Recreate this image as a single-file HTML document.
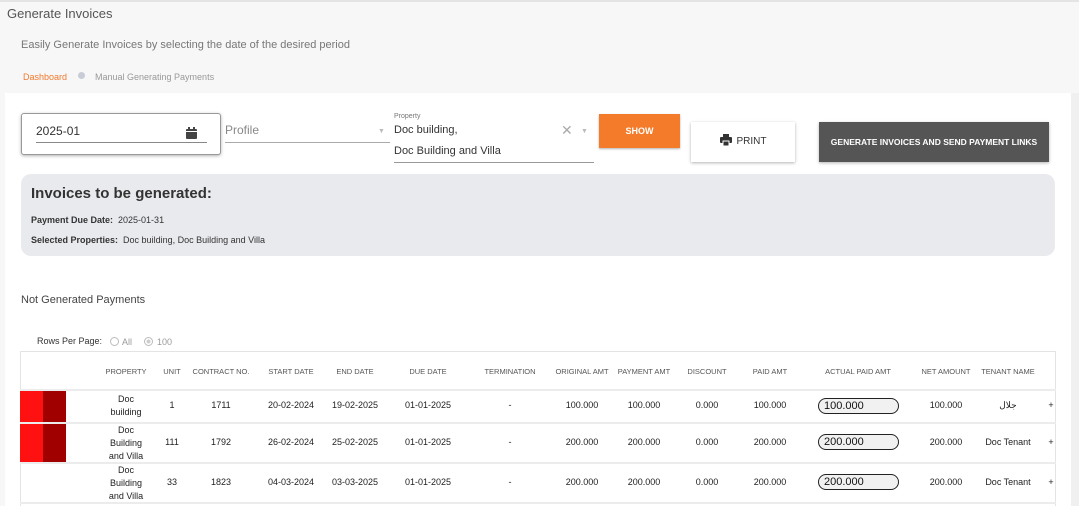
<!DOCTYPE html>
<html><head><meta charset="utf-8"><style>
*{margin:0;padding:0;box-sizing:border-box}
body{width:1079px;height:506px;overflow:hidden;background:#f7f7f7;font-family:"Liberation Sans","Noto Sans CJK SC",sans-serif;color:#333;position:relative}
.a{position:absolute;white-space:nowrap}
.c{position:absolute;text-align:center;transform:translateX(-50%);font-size:9px;color:#222;line-height:13px}
.h{position:absolute;transform:translateX(-50%);font-size:7.5px;color:#555;top:367px;white-space:nowrap}
.inp{position:absolute;left:818px;width:81px;height:16px;border:1px solid #222;border-radius:8px;background:#f1f1f1;font-size:11px;padding-left:5px;line-height:14px;color:#111}
</style></head><body>
<div class="a" style="left:0;top:0;width:1079px;height:2px;background:#e4e4e4"></div>
<div class="a" style="left:7px;top:6px;font-size:13px;color:#555">Generate Invoices</div>
<div class="a" style="left:21px;top:39px;font-size:11px;color:#777">Easily Generate Invoices by selecting the date of the desired period</div>
<div class="a" style="left:23px;top:72px;font-size:9px;color:#f07a2e">Dashboard</div>
<div class="a" style="left:78px;top:72px;width:7px;height:7px;border-radius:50%;background:#c9cbd6"></div>
<div class="a" style="left:95px;top:72px;font-size:9px;color:#999">Manual Generating Payments</div>
<div class="a" style="left:5px;top:93px;width:1066px;height:413px;background:#fff"></div>
<div class="a" style="left:1071px;top:93px;width:8px;height:413px;background:#f0f0f0"></div>
<!-- date -->
<div class="a" style="left:21px;top:113px;width:200px;height:42px;border:1px solid #999;border-radius:3px;box-shadow:0 1px 3px rgba(0,0,0,.3);background:#fff"></div>
<div class="a" style="left:36px;top:124px;font-size:12px;color:#333">2025-01</div>
<svg class="a" style="left:186px;top:127px" width="11" height="12" viewBox="0 0 11 12"><rect x="0" y="2" width="11" height="10" rx="1" fill="#444"/><rect x="2" y="0" width="2" height="3" fill="#444"/><rect x="7" y="0" width="2" height="3" fill="#444"/><rect x="0" y="4" width="11" height="1" fill="#fff"/></svg>
<div class="a" style="left:36px;top:142px;width:171px;height:1px;background:#888"></div>
<div class="a" style="left:225px;top:123px;font-size:12px;color:#888">Profile</div>
<div class="a" style="left:378px;top:128px;font-size:7px;color:#bbb">▼</div>
<div class="a" style="left:225px;top:142px;width:165px;height:1px;background:#aaa"></div>
<div class="a" style="left:394px;top:113px;font-size:7px;color:#777">Property</div>
<div class="a" style="left:394px;top:124px;font-size:11px;color:#333">Doc building,</div>
<div class="a" style="left:394px;top:145px;font-size:11px;color:#333">Doc Building and Villa</div>
<div class="a" style="left:561px;top:122px;font-size:14px;color:#aaa">✕</div>
<div class="a" style="left:581px;top:128px;font-size:7px;color:#bbb">▼</div>
<div class="a" style="left:394px;top:162px;width:200px;height:1px;background:#999"></div>
<div class="a" style="left:599px;top:114px;width:81px;height:34px;background:#f47b2a;box-shadow:0 1px 2px rgba(0,0,0,.3);color:#fff;font-size:9px;font-weight:bold;text-align:center;line-height:34px">SHOW</div>
<div class="a" style="left:691px;top:122px;width:104px;height:40px;background:#fff;box-shadow:0 1px 3px rgba(0,0,0,.3);font-size:10px;color:#333;text-align:center;line-height:40px"><svg width="12" height="12" viewBox="0 0 12 12" style="vertical-align:-2px;margin-right:5px"><rect x="3" y="0" width="6" height="3" fill="#333"/><rect x="0" y="3" width="12" height="6" rx="1" fill="#333"/><rect x="3" y="7" width="6" height="5" fill="#333" stroke="#fff" stroke-width="1"/></svg>PRINT</div>
<div class="a" style="left:819px;top:122px;width:230px;height:40px;background:#555;box-shadow:0 1px 3px rgba(0,0,0,.3);color:#fff;font-size:8.5px;font-weight:bold;text-align:center;line-height:40px">GENERATE INVOICES AND SEND PAYMENT LINKS</div>
<!-- summary -->
<div class="a" style="left:21px;top:174px;width:1034px;height:82px;background:#e9eaee;border-radius:10px"></div>
<div class="a" style="left:31px;top:185px;font-size:15px;font-weight:bold;color:#333">Invoices to be generated:</div>
<div class="a" style="left:31px;top:215px;font-size:9px;color:#333"><b>Payment Due Date:</b>&nbsp; 2025-01-31</div>
<div class="a" style="left:31px;top:235px;font-size:9px;color:#333"><b>Selected Properties:</b>&nbsp; Doc building, Doc Building and Villa</div>
<div class="a" style="left:21px;top:294px;font-size:11px;color:#444">Not Generated Payments</div>
<div class="a" style="left:37px;top:336px;font-size:9px;color:#333">Rows Per Page:</div>
<div class="a" style="left:110px;top:337px;width:9px;height:9px;border:1px solid #bbb;border-radius:50%"></div>
<div class="a" style="left:122px;top:337px;font-size:9px;color:#999">All</div>
<div class="a" style="left:144px;top:337px;width:9px;height:9px;border:1px solid #bbb;border-radius:50%;background:radial-gradient(#ccc 35%,#fff 45%)"></div>
<div class="a" style="left:157px;top:337px;font-size:9px;color:#999">100</div>
<!-- table -->
<div class="a" style="left:20px;top:351px;width:1036px;height:155px;border:1px solid #e4e4e4;border-bottom:none"></div>
<div class="a" style="left:20px;top:389px;width:1036px;height:2px;background:#ececec"></div>
<div class="a" style="left:20px;top:422px;width:1036px;height:2px;background:#ececec"></div>
<div class="a" style="left:20px;top:462px;width:1036px;height:2px;background:#ececec"></div>
<div class="a" style="left:20px;top:502px;width:1036px;height:2px;background:#ececec"></div>
<div class="a" style="left:20px;top:391px;width:23px;height:71px;background:#ff1111"></div>
<div class="a" style="left:43px;top:391px;width:23px;height:71px;background:#a00000"></div>
<div class="a" style="left:20px;top:422px;width:46px;height:2px;background:#ececec"></div>
<div class="h" style="left:126px">PROPERTY</div><div class="h" style="left:172px">UNIT</div><div class="h" style="left:221px">CONTRACT NO.</div><div class="h" style="left:291px">START DATE</div><div class="h" style="left:355px">END DATE</div><div class="h" style="left:428px">DUE DATE</div><div class="h" style="left:510px">TERMINATION</div><div class="h" style="left:582px">ORIGINAL AMT</div><div class="h" style="left:644px">PAYMENT AMT</div><div class="h" style="left:707px">DISCOUNT</div><div class="h" style="left:770px">PAID AMT</div><div class="h" style="left:858px">ACTUAL PAID AMT</div><div class="h" style="left:946px">NET AMOUNT</div><div class="h" style="left:1008px">TENANT NAME</div>
<!-- row1 -->
<div class="c" style="left:126px;top:393px">Doc<br>building</div>
<div class="c" style="left:172px;top:399px">1</div><div class="c" style="left:221px;top:399px">1711</div><div class="c" style="left:291px;top:399px">20-02-2024</div><div class="c" style="left:355px;top:399px">19-02-2025</div><div class="c" style="left:428px;top:399px">01-01-2025</div><div class="c" style="left:510px;top:399px">-</div><div class="c" style="left:582px;top:399px">100.000</div><div class="c" style="left:644px;top:399px">100.000</div><div class="c" style="left:707px;top:399px">0.000</div><div class="c" style="left:770px;top:399px">100.000</div><div class="c" style="left:946px;top:399px">100.000</div><div class="c" style="left:1008px;top:399px">جلال</div><div class="c" style="left:1051px;top:399px">+</div>
<div class="inp" style="top:398px">100.000</div>
<!-- row2 -->
<div class="c" style="left:126px;top:424px">Doc<br>Building<br>and Villa</div>
<div class="c" style="left:172px;top:436px">111</div><div class="c" style="left:221px;top:436px">1792</div><div class="c" style="left:291px;top:436px">26-02-2024</div><div class="c" style="left:355px;top:436px">25-02-2025</div><div class="c" style="left:428px;top:436px">01-01-2025</div><div class="c" style="left:510px;top:436px">-</div><div class="c" style="left:582px;top:436px">200.000</div><div class="c" style="left:644px;top:436px">200.000</div><div class="c" style="left:707px;top:436px">0.000</div><div class="c" style="left:770px;top:436px">200.000</div><div class="c" style="left:946px;top:436px">200.000</div><div class="c" style="left:1008px;top:436px">Doc Tenant</div><div class="c" style="left:1051px;top:436px">+</div>
<div class="inp" style="top:434px">200.000</div>
<!-- row3 -->
<div class="c" style="left:126px;top:464px">Doc<br>Building<br>and Villa</div>
<div class="c" style="left:172px;top:476px">33</div><div class="c" style="left:221px;top:476px">1823</div><div class="c" style="left:291px;top:476px">04-03-2024</div><div class="c" style="left:355px;top:476px">03-03-2025</div><div class="c" style="left:428px;top:476px">01-01-2025</div><div class="c" style="left:510px;top:476px">-</div><div class="c" style="left:582px;top:476px">200.000</div><div class="c" style="left:644px;top:476px">200.000</div><div class="c" style="left:707px;top:476px">0.000</div><div class="c" style="left:770px;top:476px">200.000</div><div class="c" style="left:946px;top:476px">200.000</div><div class="c" style="left:1008px;top:476px">Doc Tenant</div><div class="c" style="left:1051px;top:476px">+</div>
<div class="inp" style="top:474px">200.000</div>
</body></html>
